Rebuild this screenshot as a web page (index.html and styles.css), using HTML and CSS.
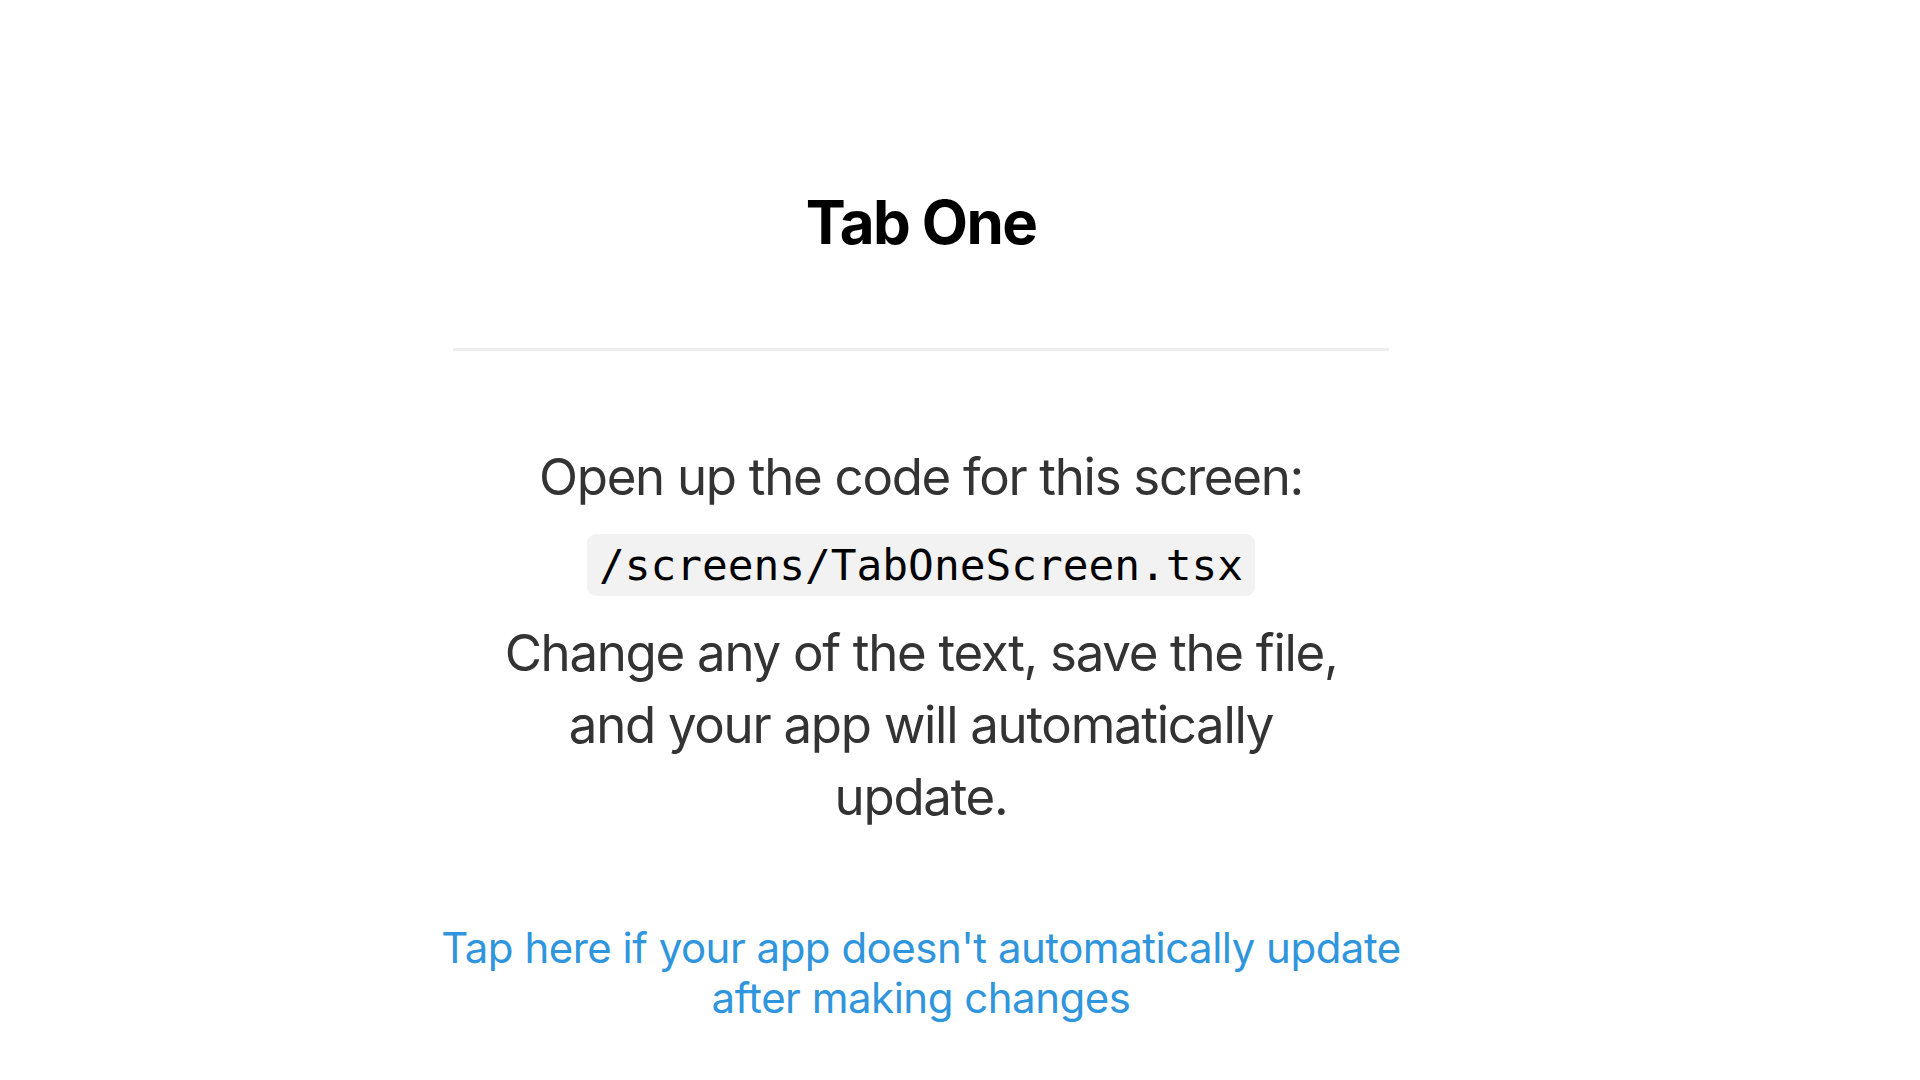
FILE: index.html
```html
<!DOCTYPE html>
<html lang="en">
<head>
<meta charset="utf-8">
<title>Tab One</title>
<link rel="stylesheet" href="styles.css">
</head>
<body>
<div class="screen">
  <h1 class="title">Tab One</h1>
  <div class="separator"></div>
  <div class="info">
    <div class="get-started">
      <p class="get-started-text">Open up the code for this screen:</p>
      <div class="code-box"><span class="mono">/screens/TabOneScreen.tsx</span></div>
      <p class="get-started-text">Change any of the text, save the file, and your app will automatically update.</p>
    </div>
    <div class="help">
      <a class="help-link" href="#">Tap here if your app doesn't automatically update after making changes</a>
    </div>
  </div>
</div>
</body>
</html>
```
FILE: styles.css
```css
html, body {
  margin: 0;
  padding: 0;
  background: #ffffff;
}
body {
  font-family: Inter, "Noto Sans", "Liberation Sans", sans-serif;
}
.screen {
  width: 1170px;
  margin-left: 336px;
  padding-top: 186px;
  display: flex;
  flex-direction: column;
  align-items: center;
}
.title {
  margin: 0;
  font-size: 60px;
  line-height: 72px;
  font-weight: 700;
  letter-spacing: -1.6px;
  color: #000;
}
.separator {
  width: 936px;
  height: 3px;
  margin: 90px 0;
  background: #eeeeee;
}
.info {
  display: flex;
  flex-direction: column;
  align-items: center;
  width: 100%;
}
.get-started {
  display: flex;
  flex-direction: column;
  align-items: center;
  margin: 0 150px;
}
.get-started-text {
  margin: 0;
  font-size: 51px;
  line-height: 72px;
  letter-spacing: -1.3px;
  text-align: center;
  color: #333333;
}
.code-box {
  margin: 21px 0;
  padding: 0 12px;
  border-radius: 9px;
  background: #f2f2f2;
  height: 62px;
  display: flex;
  align-items: center;
}
.mono {
  font-family: "DejaVu Sans Mono", "Liberation Mono", monospace;
  font-size: 42.8px;
  line-height: 62px;
  color: #000;
}
.help {
  margin: 45px 60px 0;
  display: flex;
  flex-direction: column;
  align-items: center;
}
.help-link {
  padding: 45px 0;
  font-size: 42px;
  line-height: 50px;
  letter-spacing: -0.5px;
  text-align: center;
  color: #2f95dc;
  text-decoration: none;
}
```
